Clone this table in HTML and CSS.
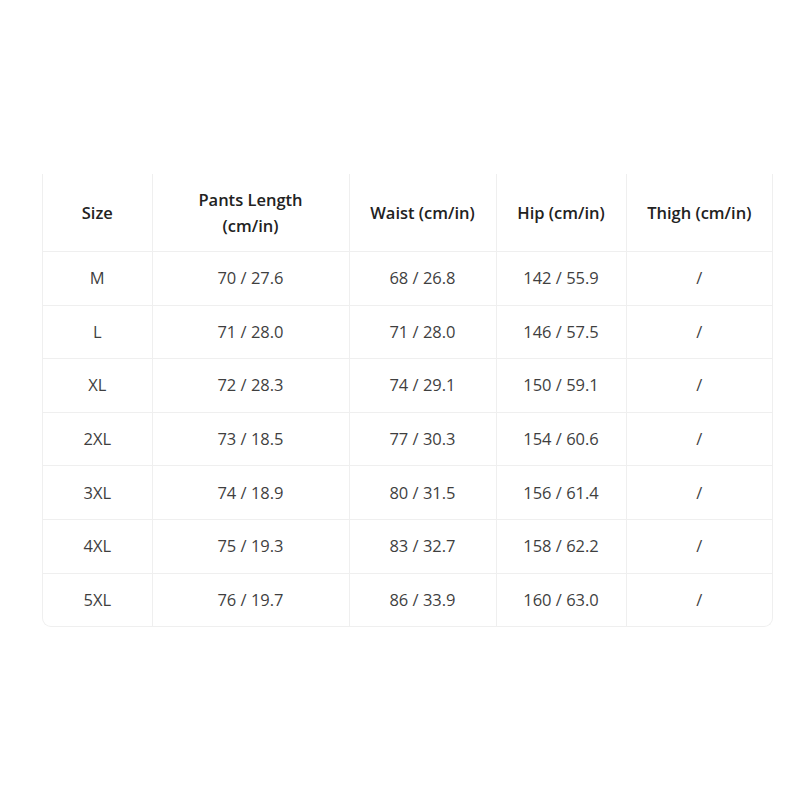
FILE: index.html
```html
<!DOCTYPE html>
<html>
<head>
<meta charset="utf-8">
<link rel="stylesheet" href="styles.css">
</head>
<body>
<div class="page">
  <div class="wrap">
    <table class="sizes">
      <colgroup>
        <col class="c1"><col class="c2"><col class="c3"><col class="c4"><col class="c5">
      </colgroup>
      <thead>
        <tr>
          <th>Size</th>
          <th>Pants Length<br>(cm/in)</th>
          <th>Waist (cm/in)</th>
          <th>Hip (cm/in)</th>
          <th>Thigh (cm/in)</th>
        </tr>
      </thead>
      <tbody>
        <tr><td>M</td><td>70 / 27.6</td><td>68 / 26.8</td><td>142 / 55.9</td><td>/</td></tr>
        <tr><td>L</td><td>71 / 28.0</td><td>71 / 28.0</td><td>146 / 57.5</td><td>/</td></tr>
        <tr><td>XL</td><td>72 / 28.3</td><td>74 / 29.1</td><td>150 / 59.1</td><td>/</td></tr>
        <tr><td>2XL</td><td>73 / 18.5</td><td>77 / 30.3</td><td>154 / 60.6</td><td>/</td></tr>
        <tr><td>3XL</td><td>74 / 18.9</td><td>80 / 31.5</td><td>156 / 61.4</td><td>/</td></tr>
        <tr><td>4XL</td><td>75 / 19.3</td><td>83 / 32.7</td><td>158 / 62.2</td><td>/</td></tr>
        <tr><td>5XL</td><td>76 / 19.7</td><td>86 / 33.9</td><td>160 / 63.0</td><td>/</td></tr>
      </tbody>
    </table>
  </div>
</div>
</body>
</html>
```

FILE: styles.css
```css
html, body {
  margin: 0;
  padding: 0;
  background: #fff;
}
.page {
  padding: 174px 0 0 42px;
  font-family: "Open Sans", "Noto Sans", "Liberation Sans", sans-serif;
}
.wrap {
  width: 729px;
  border: 1px solid #efefef;
  border-top: none;
  border-radius: 0 0 9px 9px;
  overflow: hidden;
}
.sizes {
  width: 100%;
  border-collapse: collapse;
  table-layout: fixed;
}
.c1 { width: 109px; }
.c2 { width: 197px; }
.c3 { width: 147px; }
.c4 { width: 130px; }
.c5 { width: 146px; }
.sizes th, .sizes td {
  text-align: center;
  padding: 0;
  border-left: 1px solid #efefef;
  border-bottom: 1px solid #efefef;
}
.sizes th:first-child, .sizes td:first-child {
  border-left: none;
}
.sizes tbody tr:last-child td {
  border-bottom: none;
}
.sizes th {
  height: 77px;
  font-size: 16.5px;
  font-weight: 600;
  line-height: 26px;
  color: #222;
}
.sizes td {
  height: 52.6px;
  font-size: 16.5px;
  line-height: 20px;
  color: #3f3f3f;
}
```
